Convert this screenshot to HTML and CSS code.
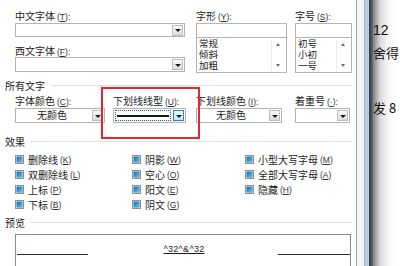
FILE: index.html
```html
<!DOCTYPE html>
<html lang="zh">
<head>
<meta charset="utf-8">
<link rel="stylesheet" href="styles.css">
</head>
<body>
<div class="screen">
  <div class="dialog">
    <div class="top">
      <div class="c1">
        <div class="lbl">中文字体<span class="k">(<u>T</u>):</span></div>
        <div class="combo mt1"><span class="val"></span><span class="btn"><i class="arr"></i></span></div>
        <div class="lbl mt7">西文字体<span class="k">(<u>F</u>):</span></div>
        <div class="combo"><span class="val"></span><span class="btn"><i class="arr"></i></span></div>
      </div>
      <div class="c2">
        <div class="lbl">字形<span class="k">(<u>Y</u>):</span></div>
        <div class="tbox mt1"></div>
        <div class="list">
          <div class="items"><div>常规</div><div>倾斜</div><div>加粗</div></div>
          <div class="sb"><i class="up"></i><i class="dn"></i></div>
        </div>
      </div>
      <div class="c3">
        <div class="lbl">字号<span class="k">(<u>S</u>):</span></div>
        <div class="tbox mt1"></div>
        <div class="list">
          <div class="items"><div>初号</div><div>小初</div><div>一号</div></div>
          <div class="sb"><i class="up"></i><i class="dn"></i></div>
        </div>
      </div>
    </div>

    <div class="group g1"><span>所有文字</span></div>

    <div class="row2">
      <div class="f1">
        <div class="lbl">字体颜色<span class="k">(<u>C</u>):</span></div>
        <div class="combo mt1"><span class="val">无颜色</span><span class="btn"><i class="arr"></i></span></div>
      </div>
      <div class="f2">
        <div class="lbl">下划线线型<span class="k">(<u>U</u>):</span></div>
        <div class="combo focus mt1"><span class="val"><span class="sel"><span class="uline"></span></span></span><span class="btn"><i class="arr"></i></span></div>
      </div>
      <div class="f3">
        <div class="lbl">下划线颜色<span class="k">(<u>I</u>):</span></div>
        <div class="combo mt1"><span class="val">无颜色</span><span class="btn"><i class="arr"></i></span></div>
      </div>
      <div class="f4">
        <div class="lbl">着重号<span class="k">(<u>·</u>):</span></div>
        <div class="combo mt1"><span class="val"></span><span class="btn"><i class="arr"></i></span></div>
      </div>
    </div>

    <div class="group g2"><span>效果</span></div>

    <div class="checks">
      <div class="chk"><i class="box"></i>删除线<span class="k">(<u>K</u>)</span></div>
      <div class="chk"><i class="box"></i>阴影<span class="k">(<u>W</u>)</span></div>
      <div class="chk"><i class="box"></i>小型大写字母<span class="k">(<u>M</u>)</span></div>
      <div class="chk"><i class="box"></i>双删除线<span class="k">(<u>L</u>)</span></div>
      <div class="chk"><i class="box"></i>空心<span class="k">(<u>O</u>)</span></div>
      <div class="chk"><i class="box"></i>全部大写字母<span class="k">(<u>A</u>)</span></div>
      <div class="chk"><i class="box"></i>上标<span class="k">(<u>P</u>)</span></div>
      <div class="chk"><i class="box"></i>阳文<span class="k">(<u>E</u>)</span></div>
      <div class="chk"><i class="box"></i>隐藏<span class="k">(<u>H</u>)</span></div>
      <div class="chk"><i class="box"></i>下标<span class="k">(<u>B</u>)</span></div>
      <div class="chk"><i class="box"></i>阴文<span class="k">(<u>G</u>)</span></div>
      <div class="chk empty"></div>
    </div>

    <div class="group g3"><span>预览</span></div>

    <div class="preview">
      <div class="pline left"></div>
      <div class="ptext"><span>^32^&amp;^32</span></div>
      <div class="pline right"></div>
    </div>
  </div>

  <div class="frame">
    <div class="fa"></div>
    <div class="fb"></div>
    <div class="fc"></div>
    <div class="fd"></div>
  </div>

  <div class="doc">
    <p class="d1">12</p>
    <p class="d2">舍得</p>
    <p class="d3">发 8</p>
  </div>

  <div class="highlight"></div>
</div>
</body>
</html>
```

FILE: styles.css
```css
* { box-sizing: border-box; margin: 0; padding: 0; }

body {
  margin: 0;
  width: 400px;
  height: 266px;
  overflow: hidden;
  background: #ffffff;
  font-family: "Noto Sans CJK SC", "Liberation Sans", sans-serif;
  font-size: 10px;
  color: #1c1c1c;
}

.screen {
  position: relative;
  display: flex;
  width: 400px;
  height: 266px;
}

.dialog {
  width: 357px;
  flex: none;
  padding-left: 5px;
  border-right: 1px solid #a9a9a9;
  background: #ffffff;
}

.lbl {
  height: 13px;
  line-height: 13px;
  white-space: nowrap;
}

.k {
  font-family: "Liberation Sans", sans-serif;
  font-size: 8.5px;
  margin-left: 2px;
  color: #333;
}

.mt1 { margin-top: 1px; }
.mt7 { margin-top: 7px; }

/* top section */
.top {
  display: flex;
  padding: 9px 0 0 10px;
}
.c1 { width: 170px; }
.c2 { width: 91px; margin-left: 11px; }
.c3 { width: 57px; margin-left: 8px; }

.combo {
  height: 15px;
  border: 1px solid #b4b4b4;
  display: flex;
  align-items: center;
  background: #fff;
}
.c1 .combo { height: 14px; }
.c1 .combo + .lbl + .combo { height: 15px; }

.val {
  flex: 1;
  text-align: center;
  line-height: 12px;
  height: 13px;
  font-size: 10px;
  padding-right: 4px;
}

.btn {
  width: 11px;
  height: 11px;
  margin-right: 1px;
  border: 1px solid #bdbdbd;
  background: linear-gradient(#fafafa, #dcdcdc);
  display: flex;
  align-items: center;
  justify-content: center;
}

.arr {
  display: block;
  width: 0;
  height: 0;
  border-left: 3px solid transparent;
  border-right: 3px solid transparent;
  border-top: 3px solid #1a1a1a;
  margin-top: 1px;
}

.tbox {
  height: 14px;
  border: 1px solid #b4b4b4;
  border-bottom: none;
}

.list {
  height: 36px;
  border: 1px solid #b4b4b4;
  display: flex;
}

.items {
  flex: 1;
  padding: 0 0 0 2px;
  font-size: 9.5px;
  line-height: 11px;
}

.sb {
  width: 13px;
  margin: 1px 2px 1px 0;
  border-left: 1px solid #ececec;
  display: flex;
  flex-direction: column;
  justify-content: space-between;
  align-items: center;
  padding: 4px 0;
}
.sb .up, .sb .dn {
  display: block;
  width: 0;
  height: 0;
  border-left: 2.5px solid transparent;
  border-right: 2.5px solid transparent;
}
.sb .up { border-bottom: 3px solid #6d6d6d; }
.sb .dn { border-top: 3px solid #6d6d6d; }

/* group headers */
.group {
  display: flex;
  align-items: center;
  height: 13px;
  width: 347px;
  line-height: 13px;
  font-size: 10px;
}
.group::after {
  content: "";
  flex: 1;
  border-top: 1px solid #dfe3e6;
  margin-left: 6px;
}
.g1 { margin-top: 6px; }
.g2 { margin-top: 12px; }
.g3 { margin-top: 4px; }

/* second row */
.row2 {
  display: flex;
  padding: 2px 0 0 10px;
}
.f1 { width: 90px; }
.f2 { width: 73px; margin-left: 8px; }
.f3 { width: 86px; margin-left: 10px; }
.f4 { width: 55px; margin-left: 13px; }

.focus .val {
  padding: 1px 2px 1px 1px;
  height: 13px;
}
.sel {
  display: flex;
  align-items: center;
  height: 11px;
  border: 1px dotted #3f5f86;
  padding: 0 1px;
}
.uline {
  flex: 1;
  height: 2px;
  background: #101830;
}
.focus .btn {
  border-color: #3c7fb1;
  background: linear-gradient(#eaf6fd, #bee6fd);
}

/* checkboxes */
.checks {
  display: grid;
  grid-template-columns: 117px 113px 1fr;
  grid-auto-rows: 15px;
  padding-left: 10px;
  margin-top: 4px;
}
.chk {
  display: flex;
  align-items: center;
  white-space: nowrap;
  font-size: 10px;
}
.box {
  display: block;
  width: 9px;
  height: 9px;
  border: 1px solid #8e8f8f;
  padding: 1px;
  margin-right: 4px;
  background: #fff;
  background-clip: padding-box;
  position: relative;
}
.box::before {
  content: "";
  display: block;
  width: 5px;
  height: 5px;
  background: linear-gradient(135deg, #1769b0, #3aa2dc 60%, #6cc3ee);
  box-shadow: 0 0 0 0.5px #2a6aa0;
}

/* preview */
.preview {
  margin: 5px 0 0 10px;
  width: 336px;
  height: 40px;
  border: 1px solid #8a8a8a;
  border-bottom: none;
  display: flex;
  align-items: flex-start;
  padding-top: 9px;
}
.pline {
  height: 1px;
  background: #2a2a2a;
  margin-top: 10px;
}
.pline.left { width: 71px; margin-left: 1px; }
.pline.right { width: 72px; }
.ptext {
  flex: 1;
  text-align: center;
  font-family: "Liberation Sans", sans-serif;
  font-size: 9px;
  line-height: 10px;
  padding-left: 2px;
  letter-spacing: 0.3px;
}
.ptext span { text-decoration: underline; }

/* window frame */
.frame {
  display: flex;
  flex: none;
  height: 266px;
}
.fa { width: 7px; background: #f4f5f6; }
.fb { width: 1px; background: #b4b4b4; }
.fc { width: 4px; background: #b6d0ec; }
.fd { width: 2px; background: #34465a; }

/* document */
.doc {
  flex: 1;
  height: 266px;
  padding: 22px 0 0 2px;
  background: linear-gradient(to right, #474747 0, #8d8d8d 3px, #d9d9d9 9px, #f6f6f6 17px, #ffffff 24px);
  font-size: 13px;
  line-height: 16px;
  color: #111;
  white-space: nowrap;
  overflow: hidden;
}
.d1 { font-family: "Liberation Sans", sans-serif; font-size: 14px; }
.d2 { margin-top: 7px; }
.d3 { margin-top: 39px; }

/* red annotation frame */
.highlight {
  position: absolute;
  left: 101px;
  top: 87px;
  width: 99px;
  height: 52px;
  border: 2px solid #e5262b;
}
```
